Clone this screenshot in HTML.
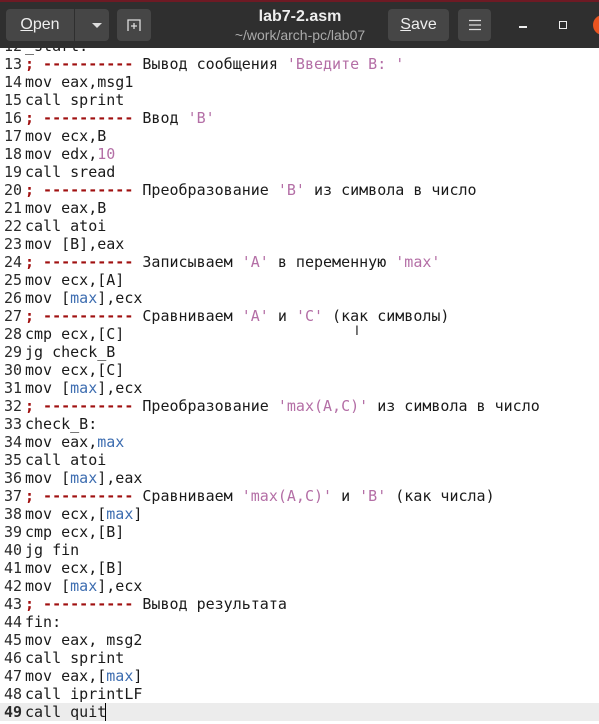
<!DOCTYPE html>
<html><head><meta charset="utf-8"><style>
body{margin:0;width:599px;height:724px;overflow:hidden;background:#fff;position:relative;font-family:"Liberation Sans",sans-serif}
.hd{position:absolute;left:0;top:0;width:599px;height:48px;background:#2f2f2f;border-top:2px solid #6e1a24;box-sizing:border-box}
.btn{position:absolute;top:9px;height:32px;background:#464646;border-radius:4px;color:#eee;font-size:16px;line-height:32px;text-align:center}
.ed{position:absolute;left:0;top:37px;width:599px;font-family:"DejaVu Sans Mono",monospace;font-size:15px;line-height:18px;color:#1a1a1a}
.l{height:18px;white-space:pre;position:relative}
.n{display:inline-block;width:22px;text-align:right;margin-right:3px;color:#2a2a2a}
.c{color:#a01010;font-weight:bold}.k{color:#1a1a40}.s{color:#b46fa6}.b{color:#3d6db0}
.cur{background:#ececec}
</style></head><body>
<div class="ed">
<div class="l"><span class="n">12</span>_start:</div>
<div class="l"><span class="n">13</span><span class="c">; ----------</span> Вывод сообщения <span class="s">'Введите B: '</span></div>
<div class="l"><span class="n">14</span>mov eax,msg1</div>
<div class="l"><span class="n">15</span>call sprint</div>
<div class="l"><span class="n">16</span><span class="c">; ----------</span> Ввод <span class="s">'B'</span></div>
<div class="l"><span class="n">17</span>mov ecx,B</div>
<div class="l"><span class="n">18</span>mov edx,<span class="s">10</span></div>
<div class="l"><span class="n">19</span>call sread</div>
<div class="l"><span class="n">20</span><span class="c">; ----------</span> Преобразование <span class="s">'B'</span> из символа в число</div>
<div class="l"><span class="n">21</span>mov eax,B</div>
<div class="l"><span class="n">22</span>call atoi</div>
<div class="l"><span class="n">23</span>mov [B],eax</div>
<div class="l"><span class="n">24</span><span class="c">; ----------</span> Записываем <span class="s">'A'</span> в переменную <span class="s">'max'</span></div>
<div class="l"><span class="n">25</span>mov ecx,[A]</div>
<div class="l"><span class="n">26</span>mov [<span class="b">max</span>],ecx</div>
<div class="l"><span class="n">27</span><span class="c">; ----------</span> Сравниваем <span class="s">'A'</span> и <span class="s">'C'</span> (как символы)</div>
<div class="l"><span class="n">28</span>cmp ecx,[C]</div>
<div class="l"><span class="n">29</span>jg check_B</div>
<div class="l"><span class="n">30</span>mov ecx,[C]</div>
<div class="l"><span class="n">31</span>mov [<span class="b">max</span>],ecx</div>
<div class="l"><span class="n">32</span><span class="c">; ----------</span> Преобразование <span class="s">'max(A,C)'</span> из символа в число</div>
<div class="l"><span class="n">33</span>check_B:</div>
<div class="l"><span class="n">34</span>mov eax,<span class="b">max</span></div>
<div class="l"><span class="n">35</span>call atoi</div>
<div class="l"><span class="n">36</span>mov [<span class="b">max</span>],eax</div>
<div class="l"><span class="n">37</span><span class="c">; ----------</span> Сравниваем <span class="s">'max(A,C)'</span> и <span class="s">'B'</span> (как числа)</div>
<div class="l"><span class="n">38</span>mov ecx,[<span class="b">max</span>]</div>
<div class="l"><span class="n">39</span>cmp ecx,[B]</div>
<div class="l"><span class="n">40</span>jg fin</div>
<div class="l"><span class="n">41</span>mov ecx,[B]</div>
<div class="l"><span class="n">42</span>mov [<span class="b">max</span>],ecx</div>
<div class="l"><span class="n">43</span><span class="c">; ----------</span> Вывод результата</div>
<div class="l"><span class="n">44</span>fin:</div>
<div class="l"><span class="n">45</span>mov eax, msg2</div>
<div class="l"><span class="n">46</span>call sprint</div>
<div class="l"><span class="n">47</span>mov eax,[<span class="b">max</span>]</div>
<div class="l"><span class="n">48</span>call iprintLF</div>
<div class="l cur"><span class="n" style="font-weight:bold">49</span>call quit<span style="border-left:1px solid #000;margin-left:-1px"></span></div>
</div>
<div style="position:absolute;left:355px;top:322px;font-size:14px;color:#333">I</div>
<div class="hd"></div>
<div class="btn" style="left:6px;width:103px"><span style="position:absolute;left:0;width:68px;text-align:center"><u>O</u>pen</span><span style="position:absolute;left:68px;top:0;width:1px;height:32px;background:#2f2f2f"></span><span style="position:absolute;left:86px;top:14px;width:0;height:0;border-left:5px solid transparent;border-right:5px solid transparent;border-top:5px solid #ddd"></span></div>
<div class="btn" style="left:117px;width:34px"><svg width="16" height="16" style="margin-top:8px" viewBox="0 0 16 16"><path d="M2 14V3h12v11M8 6v6M5 9h6" stroke="#ddd" stroke-width="1.3" fill="none"/></svg></div>
<div style="position:absolute;left:200px;width:200px;top:8px;text-align:center;color:#eee;font-weight:bold;font-size:16px">lab7-2.asm</div>
<div style="position:absolute;left:200px;width:200px;top:27px;text-align:center;color:#aaa;font-size:14px">~/work/arch-pc/lab07</div>
<div class="btn" style="left:388px;width:61px"><u>S</u>ave</div>
<div class="btn" style="left:458px;width:33px"><svg width="14" height="12" style="margin-top:10px"><path d="M1 1.5h12M1 6h12M1 10.5h12" stroke="#ddd" stroke-width="1.2"/></svg></div>
<div style="position:absolute;left:519px;top:26px;width:8px;height:1.5px;background:#eee"></div>
<div style="position:absolute;left:559px;top:21px;width:6px;height:6px;border:1.5px solid #eee"></div>
<div style="position:absolute;left:593px;top:15px;width:20px;height:20px;border-radius:50%;background:#e95420"></div>
</body></html>
